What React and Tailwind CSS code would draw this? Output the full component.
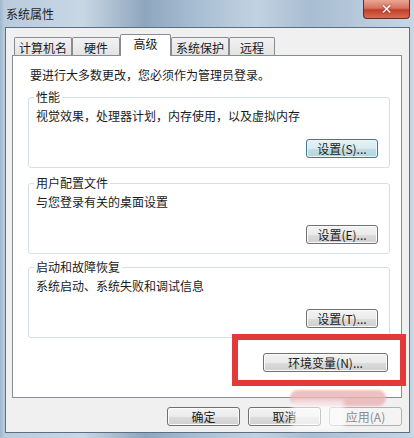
import clsx from 'clsx';

const tabs = [
  { label: '计算机名', w: 'w-[58px]' },
  { label: '硬件', w: 'w-[48px]' },
  { label: '高级', w: 'w-[51px]', active: true },
  { label: '系统保护', w: 'w-[58px]' },
  { label: '远程', w: 'w-[46px]' },
];

const groups = [
  { title: '性能', body: '视觉效果，处理器计划，内存使用，以及虚拟内存', button: '设置(S)...', focused: true },
  { title: '用户配置文件', body: '与您登录有关的桌面设置', button: '设置(E)...' },
  { title: '启动和故障恢复', body: '系统启动、系统失败和调试信息', button: '设置(T)...' },
];

const WinButton = ({ children, className, focused, disabled }) => (
  <button
    className={clsx(
      'h-[19px] rounded-[3px] border text-[12px] leading-none flex items-center justify-center',
      focused &&
        'border-[#3d7a93] bg-[linear-gradient(#e6f2f6_0%,#d8ebf1_50%,#c3dfe8_51%,#b3d4df_100%)] text-[#1c1c1c] shadow-[inset_0_0_0_1px_#e9f6fa]',
      !focused && !disabled &&
        'border-[#707070] bg-[linear-gradient(#f3f3f3_0%,#ebebeb_50%,#dddddd_51%,#cfcfcf_100%)] text-[#1c1c1c] shadow-[inset_0_0_0_1px_#fbfbfb]',
      disabled && 'border-[#adb2b5] bg-[#f4f4f4] text-[#8a8a8a]',
      className
    )}
  >
    {children}
  </button>
);

const GroupBox = ({ title, body, button, focused, className }) => (
  <fieldset className={clsx('border border-[#d5dfe5] rounded-[3px] px-[5px] pb-[9px]', className)}>
    <legend className="px-[2px] text-[12px] leading-[16px] text-[#1a1a1a]">{title}</legend>
    <div className="pl-[2px] mt-[4px] text-[12px] leading-[14px] text-[#1a1a1a]">{body}</div>
    <div className="flex justify-end mt-[16px] pr-[6px]">
      <WinButton focused={focused} className="w-[72px]">{button}</WinButton>
    </div>
  </fieldset>
);

const App = () => {
  return (
    <div className="relative w-[414px] h-[438px] flex flex-col overflow-hidden font-['Noto_Sans_CJK_SC',sans-serif] bg-[linear-gradient(90deg,#9fb6cc_0%,#b9cbdd_1%,#c9d7e5_20%,#8ea6be_35%,#a9bfd4_48%,#c2d2e2_62%,#a8bdd2_75%,#c7d6e5_100%)]">
      {/* title bar */}
      <div className="h-[27px] flex items-start">
        <span className="pl-[6px] pt-[6px] text-[12px] leading-[16px] text-[#1e1e1e]">系统属性</span>
        <div className="ml-auto mr-[4px] w-[47px] h-[19px] rounded-b-[4px] border border-t-0 border-[#6b2a22] bg-[linear-gradient(#e9a795_0%,#d7735f_45%,#c2402a_55%,#d86b53_100%)] flex items-center justify-center">
          <span className="text-white text-[14px] font-bold leading-none font-['DejaVu_Sans',sans-serif] [text-shadow:0_0_2px_#5a1a10]">✕</span>
        </div>
      </div>

      {/* client area */}
      <div className="flex-1 ml-[5px] mr-[4px] mb-[5px] bg-[#f0f0f0] border border-[#5b6f84] flex flex-col pt-[6px] pl-[6px] pr-[7px] pb-[6px]">
        <div className="h-[21px] flex items-end pl-[2px]">
          {tabs.map(t => (
            <div
              key={t.label}
              className={clsx(
                t.w,
                'flex justify-center text-[12px] text-[#1a1a1a] border border-b-0 border-[#898c95] rounded-t-[2px]',
                t.active
                  ? 'relative z-10 h-[22px] -mb-px bg-white pt-[2px] leading-[14px]'
                  : 'h-[18px] bg-[linear-gradient(#f2f2f2,#e3e3e3)] pt-[3px] leading-[14px]'
              )}
            >
              {t.label}
            </div>
          ))}
        </div>

        <div className="flex-1 bg-white border border-[#898c95] pt-[12px] pl-[15px] pr-[11px] flex flex-col">
          <div className="pl-[2px] text-[12px] leading-[14px] text-[#1a1a1a]">要进行大多数更改，您必须作为管理员登录。</div>
          <GroupBox {...groups[0]} className="mt-[7px]" />
          <GroupBox {...groups[1]} className="mt-[7px]" />
          <GroupBox {...groups[2]} className="mt-[5px]" />
          <div className="flex justify-end mt-[15px] pr-[2px]">
            <WinButton className="w-[125px]">环境变量(N)...</WinButton>
          </div>
        </div>

        <div className="flex justify-end gap-[8px] mt-[9px]">
          <WinButton className="w-[73px]">确定</WinButton>
          <WinButton className="w-[73px]">取消</WinButton>
          <WinButton className="w-[73px]" disabled>应用(A)</WinButton>
        </div>
      </div>

      {/* red annotation frame */}
      <div className="absolute left-[232px] top-[334px] w-[174px] h-[52px] border-[6px] border-[#e23a3a]" />
      {/* watermark */}
      <div className="absolute left-[290px] top-[390px] w-[96px] h-[16px] rounded-full bg-[#e9b1b4] opacity-80 blur-[1px]" />
      <div className="absolute left-[292px] top-[400px] w-[52px] h-[30px] bg-white opacity-60 blur-[2px]" />
    </div>
  );
};

export default App;
